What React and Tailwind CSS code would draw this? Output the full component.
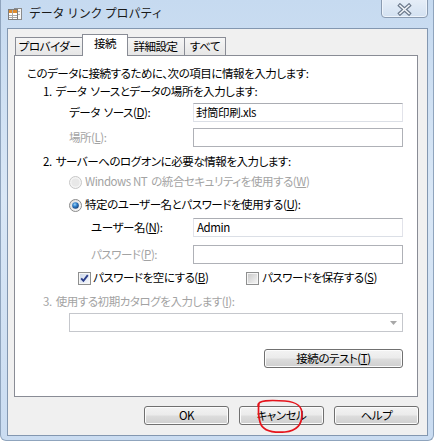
import React from "react";

function TitleIcon() {
  return (
    <svg width="16" height="16" viewBox="0 0 16 16">
      <rect x="7.5" y="2.5" width="7" height="11" fill="#f7f7f7" stroke="#8c8c8c" />
      <line x1="9" y1="5.5" x2="13" y2="5.5" stroke="#b5b5b5" />
      <line x1="9" y1="8.5" x2="13" y2="8.5" stroke="#b5b5b5" />
      <rect x="1.5" y="3.5" width="9" height="10" fill="#ffffff" stroke="#7d7d7d" />
      <rect x="2" y="4" width="8" height="3" fill="#de8c2e" />
      <line x1="2" y1="9.5" x2="10" y2="9.5" stroke="#a9a9a9" />
      <line x1="2" y1="11.5" x2="10" y2="11.5" stroke="#a9a9a9" />
      <line x1="5.5" y1="4" x2="5.5" y2="13" stroke="#a9a9a9" />
    </svg>
  );
}

function CloseGlyph() {
  return (
    <svg width="15" height="13" viewBox="0 0 15 13">
      <path d="M3 2.5 L12 10.5 M12 2.5 L3 10.5" stroke="#6c7a8c" strokeWidth="3.8" strokeLinecap="square" fill="none" />
      <path d="M3 2.5 L12 10.5 M12 2.5 L3 10.5" stroke="#f4f7fb" strokeWidth="1.5" strokeLinecap="square" fill="none" />
    </svg>
  );
}

function RadioOn() {
  return (
    <svg width="13" height="13" viewBox="0 0 13 13">
      <defs>
        <linearGradient id="rbg" x1="0" y1="0" x2="1" y2="1">
          <stop offset="0" stopColor="#dcdcdc" />
          <stop offset="1" stopColor="#fbfbfb" />
        </linearGradient>
        <radialGradient id="rdot" cx="0.4" cy="0.35" r="0.7">
          <stop offset="0" stopColor="#9fd6f7" />
          <stop offset="0.45" stopColor="#2f7fcb" />
          <stop offset="1" stopColor="#173a6e" />
        </radialGradient>
      </defs>
      <circle cx="6.5" cy="6.5" r="6" fill="url(#rbg)" stroke="#8a8a8a" />
      <circle cx="6.5" cy="6.5" r="3.3" fill="url(#rdot)" />
    </svg>
  );
}

function RadioOffDisabled() {
  return (
    <svg width="13" height="13" viewBox="0 0 13 13">
      <circle cx="6.5" cy="6.5" r="6" fill="#f4f4f4" stroke="#c6c6c6" />
      <circle cx="6.5" cy="6.5" r="4" fill="#e8e8e8" />
    </svg>
  );
}

function CheckOn() {
  return (
    <svg width="13" height="13" viewBox="0 0 13 13">
      <defs>
        <linearGradient id="cbg" x1="0" y1="0" x2="1" y2="1">
          <stop offset="0" stopColor="#cfd9ea" />
          <stop offset="1" stopColor="#f5f8fc" />
        </linearGradient>
      </defs>
      <rect x="0.5" y="0.5" width="12" height="12" fill="#f6f6f6" stroke="#8e8f8f" />
      <rect x="2" y="2" width="9" height="9" fill="url(#cbg)" />
      <path d="M3.2 6.4 L5.4 8.8 L9.8 3.2" stroke="#2a3d8a" strokeWidth="1.9" fill="none" />
    </svg>
  );
}

function CheckOff() {
  return (
    <svg width="13" height="13" viewBox="0 0 13 13">
      <defs>
        <linearGradient id="cog" x1="0" y1="0" x2="1" y2="1">
          <stop offset="0" stopColor="#cbcbcb" />
          <stop offset="1" stopColor="#f3f3f3" />
        </linearGradient>
      </defs>
      <rect x="0.5" y="0.5" width="12" height="12" fill="#f6f6f6" stroke="#8e8f8f" />
      <rect x="2" y="2" width="9" height="9" fill="url(#cog)" />
    </svg>
  );
}

function WinButton({ children, className = "" }) {
  return (
    <div
      className={
        "h-[19px] rounded-[3px] border border-[#707070] bg-[linear-gradient(#f3f3f3_0%,#ebebeb_48%,#dddddd_52%,#cfcfcf_100%)] shadow-[inset_0_0_0_1px_#fcfcfc] flex items-center justify-center text-black " +
        className
      }
    >
      {children}
    </div>
  );
}

const U = ({ children }) => <span className="underline underline-offset-[1px]">{children}</span>;
const Sp = () => <span className="inline-block w-[4px]" />;

export default function App() {
  return (
    <div className="relative w-[434px] h-[441px] overflow-hidden font-['Noto_Sans_CJK_JP','Noto_Sans',sans-serif] text-[11.5px] leading-none text-black">
      <div className="w-full h-full flex flex-col border-l border-r border-b border-[#8fa4bd] rounded-b-[6px] bg-[linear-gradient(180deg,#c6daf0_0%,#d9e7f6_45%,#cadcf1_100%)] pl-[6px] pr-[5px] pb-[4px]">
        {/* Title bar */}
        <div className="h-[28px] flex items-start">
          <div className="mt-[6px]">
            <TitleIcon />
          </div>
          <div className="ml-[6px] mt-[6px] text-[12px] tracking-[-0.2px] text-[#1a1a1a] leading-[14px]">データ リンク プロパティ</div>
          <div className="ml-auto -mt-[2px] w-[47px] h-[20px] rounded-b-[4px] border border-[#8a9bb1] bg-[linear-gradient(180deg,#e6eef8_0%,#d3e1f1_100%)] shadow-[inset_0_0_0_1px_#eef4fb] flex items-center justify-center pt-[2px]">
            <CloseGlyph />
          </div>
        </div>

        {/* Client area */}
        <div className="flex-1 border border-[#8397b0] bg-[#f0f0f0] pl-[6px] pt-[5px] pr-[8px] flex flex-col tracking-[-0.45px] [font-feature-settings:'palt']">
          {/* Tabs */}
          <div className="flex items-end h-[21px] ml-[1px]">
            <div className="w-[69px] h-[18px] border border-b-0 border-[#898c95] bg-[linear-gradient(180deg,#f6f6f6_0%,#e6e6e6_100%)] flex items-center justify-center">
              プロバイダー
            </div>
            <div className="relative z-10 -mx-[2px] w-[46px] h-[22px] -mb-[1px] border border-b-0 border-[#898c95] bg-white flex items-center justify-center pb-[3px]">
              接続
            </div>
            <div className="w-[59px] h-[18px] border border-b-0 border-[#898c95] bg-[linear-gradient(180deg,#f6f6f6_0%,#e6e6e6_100%)] flex items-center justify-center">
              詳細設定
            </div>
            <div className="w-[41px] h-[18px] border border-b-0 border-l-0 border-[#898c95] bg-[linear-gradient(180deg,#f6f6f6_0%,#e6e6e6_100%)] flex items-center justify-center">
              すべて
            </div>
          </div>

          {/* Panel */}
          <div className="w-[404px] h-[342px] bg-white border border-[#898c95] pt-[9px] flex flex-col">
            <div className="h-[18px] flex items-center ml-[12px]">このデータに接続するために、次の項目に情報を入力します:</div>
            <div className="h-[17px] flex items-center ml-[28px]">
              1.<Sp />データ<Sp />ソースとデータの場所を入力します:
            </div>
            <div className="mt-[3px] h-[19px] flex items-center ml-[54px]">
              <span className="w-[124px]">
                データ<Sp />ソース(<U>D</U>):
              </span>
              <div className="w-[210px] h-[19px] border border-[#abadb3] border-b-[#dbdfe6] border-l-[#e2e3ea] border-r-[#e2e3ea] bg-white flex items-center pl-[2px]">
                封筒印刷.xls
              </div>
            </div>
            <div className="mt-[6px] h-[19px] flex items-center ml-[54px]">
              <span className="w-[124px] text-[#a3a3a3]">
                場所(<U>L</U>):
              </span>
              <div className="w-[210px] h-[19px] border border-[#afb1b7] bg-white" />
            </div>
            <div className="mt-[6px] h-[18px] flex items-center ml-[28px]">
              2.<Sp />サーバーへのログオンに必要な情報を入力します:
            </div>
            <div className="mt-[2px] h-[18px] flex items-center ml-[54px] text-[#a3a3a3]">
              <RadioOffDisabled />
              <span className="ml-[3px]">
                Windows NT<Sp />の統合セキュリティを使用する(<U>W</U>)
              </span>
            </div>
            <div className="mt-[5px] h-[18px] flex items-center ml-[54px]">
              <RadioOn />
              <span className="ml-[3px]">
                特定のユーザー名とパスワードを使用する(<U>U</U>):
              </span>
            </div>
            <div className="mt-[4px] h-[19px] flex items-center ml-[76px]">
              <span className="w-[102px]">
                ユーザー名(<U>N</U>):
              </span>
              <div className="w-[210px] h-[19px] border border-[#abadb3] border-b-[#dbdfe6] border-l-[#e2e3ea] border-r-[#e2e3ea] bg-white flex items-center pl-[3px]">
                Admin
              </div>
            </div>
            <div className="mt-[8px] h-[19px] flex items-center ml-[76px]">
              <span className="w-[102px] text-[#a3a3a3]">
                パスワード(<U>P</U>):
              </span>
              <div className="w-[210px] h-[19px] border border-[#afb1b7] bg-white" />
            </div>
            <div className="mt-[5px] h-[18px] flex items-center ml-[63px]">
              <CheckOn />
              <span className="ml-[2px] w-[153px]">
                パスワードを空にする(<U>B</U>)
              </span>
              <CheckOff />
              <span className="ml-[3px]">
                パスワードを保存する(<U>S</U>)
              </span>
            </div>
            <div className="mt-[6px] h-[18px] flex items-center ml-[28px] text-[#a3a3a3]">
              3.<Sp />使用する初期カタログを入力します(<U>I</U>):
            </div>
            <div className="mt-[2px] h-[19px] ml-[54px] w-[334px] border border-[#c5c7cc] bg-white flex items-center justify-end pr-[5px]">
              <svg width="7" height="4" viewBox="0 0 7 4">
                <path d="M0 0 L7 0 L3.5 4 Z" fill="#a8a8a8" />
              </svg>
            </div>
            <div className="mt-[17px] flex justify-end pr-[14px]">
              <WinButton className="w-[139px]">
                接続のテスト(<U>T</U>)
              </WinButton>
            </div>
          </div>

          {/* Bottom buttons */}
          <div className="mt-[9px] flex justify-end gap-[10px]">
            <WinButton className="w-[85px]">OK</WinButton>
            <WinButton className="w-[85px]">キャンセル</WinButton>
            <WinButton className="w-[85px]">ヘルプ</WinButton>
          </div>
        </div>
      </div>

      {/* Red hand-drawn annotation circle */}
      <svg className="absolute left-0 top-0 pointer-events-none" width="434" height="441" viewBox="0 0 434 441">
        <path
          d="M258 406 C257 400, 270 400, 285 401 C297 402, 302 406, 302 414 C302 424, 297 431, 285 432 C272 433, 262 430, 260 422 C258 415, 258 410, 259 403"
          fill="none"
          stroke="#e5141c"
          strokeWidth="1.7"
          strokeLinecap="round"
        />
      </svg>
    </div>
  );
}
